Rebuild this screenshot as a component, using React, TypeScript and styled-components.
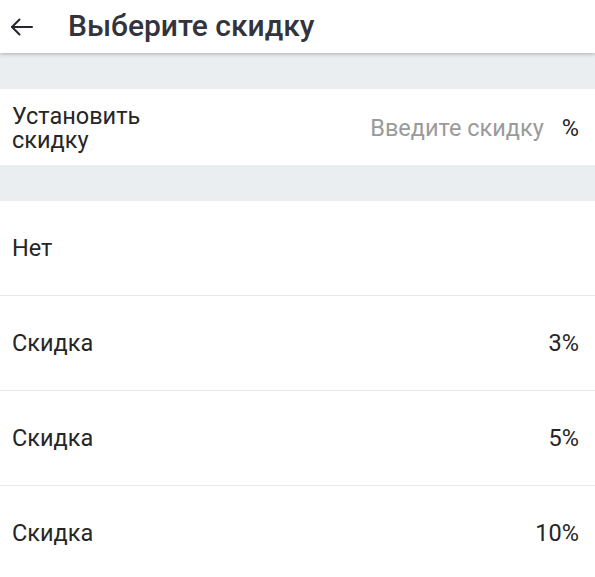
import styled, { createGlobalStyle } from "styled-components"

const Global = createGlobalStyle`
  html, body {
    margin      : 0;
    padding     : 0;
    background  : #ffffff;
    font-family : Roboto, "Liberation Sans", sans-serif;
  }
`

const Page = styled.div`
  width       : 595px;
  height      : 577px;
  overflow    : hidden;
  background  : #ebeef1;
`

const Header = styled.header`
  position    : relative;
  z-index     : 1;
  height      : 53px;
  display     : flex;
  align-items : center;
  background  : #ffffff;
  box-shadow  : 0 1px 4px rgba(0, 0, 0, 0.28);
`

const Back = styled.button`
  width       : 44px;
  height      : 44px;
  padding     : 0 0 0 10px;
  border      : none;
  background  : none;
  display     : flex;
  align-items : center;
  color       : #26262e;
`

const Title = styled.h1`
  margin      : 0 0 2px 24px;
  font-size   : 30px;
  font-weight : 500;
  color       : #33333c;
  -webkit-font-smoothing : antialiased;
`

const Spacer = styled.div`
  height      : 36px;
`

const InputRow = styled.div`
  height      : 76px;
  display     : flex;
  align-items : center;
  padding     : 0 16px 0 12px;
  background  : #ffffff;
`

const Label = styled.div`
  flex        : 1;
  font-size   : 23.5px;
  color       : #262626;
  padding-top : 2px;

  & > span {
    display   : block;
    height    : 24px;
    line-height : 24px;
  }
`

const Input = styled.input`
  width       : 190px;
  border      : none;
  outline     : none;
  text-align  : right;
  font-family : inherit;
  font-size   : 23.5px;
  color       : #262626;
  padding     : 0;
  margin-top  : 2px;
  &::placeholder {
    color     : #9a9a9a;
  }
`

const Unit = styled.span`
  margin-left : 18px;
  margin-top  : 2px;
  font-size   : 23.5px;
  color       : #262626;
`

const List = styled.div`
  background  : #ffffff;
`

const Option = styled.div`
  height      : 94px;
  display     : flex;
  align-items : center;
  justify-content : space-between;
  padding     : 0 16px 0 12px;
  font-size   : 23.5px;
  color       : #262626;
  border-bottom : 1px solid #e9e9e9;
  &:last-child { border-bottom: none; }
`

const options = [
  { label: "Нет", value: "" },
  { label: "Скидка", value: "3%" },
  { label: "Скидка", value: "5%" },
  { label: "Скидка", value: "10%" },
]

export default function App() {
  return <Page>
    <Global/>
    <Header>
      <Back aria-label="Назад">
        <svg width="24" height="24" viewBox="0 0 24 24" fill="none" stroke="currentColor" strokeWidth="2" strokeLinecap="round" strokeLinejoin="round">
          <path d="M22 12H2"/>
          <path d="M9.5 4.5L2 12l7.5 7.5"/>
        </svg>
      </Back>
      <Title>Выберите скидку</Title>
    </Header>

    <Spacer/>

    <InputRow>
      <Label>
        <span>Установить</span>
        <span>скидку</span>
      </Label>
      <Input placeholder="Введите скидку"/>
      <Unit>%</Unit>
    </InputRow>

    <Spacer/>

    <List>
      {options.map((o, i) => (
        <Option key={i}>
          <span>{o.label}</span>
          <span>{o.value}</span>
        </Option>
      ))}
    </List>
  </Page>
}
